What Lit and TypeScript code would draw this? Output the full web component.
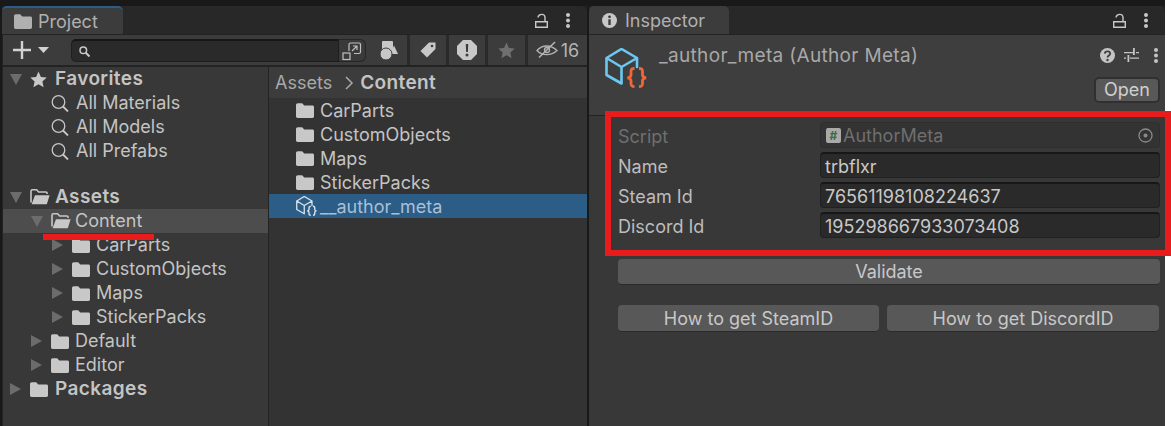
import { LitElement, html, css, svg } from "lit";
import { customElement } from "lit/decorators.js";

const folder = svg`<path d="M0 2.2C0 1 .8.3 1.8.3h4.4l2 2.2h8.2c1 0 1.6.7 1.6 1.6v9.2c0 1-.7 1.7-1.6 1.7H1.7C.7 15 0 14.3 0 13.3z" fill="currentColor"/>`;
const folderOpen = svg`<path d="M1 13.6V2.2C1 1.3 1.6.8 2.4.8h4.2l2 2.2h7.2c.8 0 1.3.5 1.3 1.3V5" fill="none" stroke="currentColor" stroke-width="1.6"/><path d="M1.6 15.2 5 6.2h14.6l-2.8 9z" fill="currentColor"/>`;
const star = svg`<path d="M8.5 .5l2.4 5.4 5.8.6-4.3 3.9 1.2 5.8-5.1-3-5.1 3 1.2-5.800L.3 6.500l5.800-.6z" fill="currentColor"/>`;
const lens = svg`<circle cx="7.500" cy="8" r="6.300" fill="none" stroke="currentColor" stroke-width="1.300"/><path d="M12 12.500l5 5" stroke="currentColor" stroke-width="1.800"/>`;
// cube with braces, drawn on a 42x40 grid; used large in the inspector and small in the list
const cube = svg`<path d="M32 19V10L16.500 1 1.500 10v17l15 8.500M1.500 10l15 9v16.500M16.500 19 32 10" fill="none" stroke="currentColor" stroke-width="2.600" stroke-linejoin="round" stroke-linecap="round"/>`;
const braces = svg`<path d="M29.500 20.500c-3 0-3.500 1-3.500 3v3.500c0 1.500-.8 2.300-3.500 2.800 2.700.5 3.500 1.300 3.500 2.800v3c0 2 .5 3 3.500 3M34 20.500c3 0 3.500 1 3.500 3v3.500c0 1.500.8 2.300 3.500 2.800-2.700.5-3.500 1.300-3.500 2.800v3c0 2-.5 3-3.500 3" fill="none" stroke="currentColor" stroke-width="2.800"/>`;

type Row = { label: string; depth: number; icon: "star" | "folder" | "open" | "lens"; arrow?: "down" | "right"; bold?: boolean; on?: boolean };

const tree: (Row | null)[] = [
  { label: "Favorites", depth: 0, icon: "star", arrow: "down", bold: true },
  { label: "All Materials", depth: 1, icon: "lens" },
  { label: "All Models", depth: 1, icon: "lens" },
  { label: "All Prefabs", depth: 1, icon: "lens" },
  null,
  { label: "Assets", depth: 0, icon: "open", arrow: "down", bold: true },
  { label: "Content", depth: 1, icon: "open", arrow: "down", on: true },
  { label: "CarParts", depth: 2, icon: "folder", arrow: "right" },
  { label: "CustomObjects", depth: 2, icon: "folder", arrow: "right" },
  { label: "Maps", depth: 2, icon: "folder", arrow: "right" },
  { label: "StickerPacks", depth: 2, icon: "folder", arrow: "right" },
  { label: "Default", depth: 1, icon: "folder", arrow: "right" },
  { label: "Editor", depth: 1, icon: "folder", arrow: "right" },
  { label: "Packages", depth: 0, icon: "folder", arrow: "right", bold: true },
];

const fields = [
  { label: "Name", value: "trbflxr" },
  { label: "Steam Id", value: "76561198108224637" },
  { label: "Discord Id", value: "195298667933073408" },
];

@customElement("app-root")
export class AppRoot extends LitElement {
  static styles = css`
    :host {
      display: block;
      position: relative;
      width: 1171px;
      height: 426px;
      overflow: hidden;
      background: #fff;
      font-family: Inter, "Liberation Sans", sans-serif;
      font-size: 18px;
      color: #c4c4c4;
    }
    svg { display: block; }
    b {
      font-size: 19px;
      font-weight: 600;
      letter-spacing: 0.4px;
    }
    .shell {
      display: flex;
      gap: 2px;
      box-sizing: border-box;
      width: 1165px;
      height: 426px;
      padding: 6px 0 0 2px;
      background: #191919;
    }
    .panel {
      display: flex;
      flex-direction: column;
      background: #232323;
    }
    .project { width: 585px; }
    .inspector { width: 576px; }
    .tabs {
      display: flex;
      justify-content: space-between;
      align-items: center;
      flex: none;
      height: 28px;
      background: #282828;
      border-radius: 6px 6px 0 0;
    }
    .tab {
      display: flex;
      align-items: center;
      box-sizing: border-box;
      height: 28px;
      background: #3c3c3c;
      border-radius: 5px 5px 0 0;
      color: #b0b0b0;
    }
    .project .tab {
      gap: 6px;
      width: 121px;
      padding-left: 12px;
      border-top: 2px solid #2c5d87;
    }
    .inspector .tab { gap: 8px; width: 140px; padding-left: 13px; }
    .win-tools {
      display: flex;
      align-items: center;
      gap: 18px;
      padding-right: 17px;
      color: #c8c8c8;
    }
    .toolbar {
      display: flex;
      flex: none;
      height: 30px;
      margin: 1px 0 2px 1px;
      background: #3c3c3c;
    }
    .adder {
      display: flex;
      align-items: center;
      gap: 7px;
      width: 68px;
      padding-left: 10px;
      box-sizing: border-box;
      color: #d2d2d2;
    }
    .search {
      display: flex;
      align-items: center;
      box-sizing: border-box;
      width: 268px;
      height: 23px;
      margin-top: 4px;
      padding-left: 7px;
      background: #2a2a2a;
      border: 1px solid #1e1e1e;
      border-top: 2px solid #171717;
      border-radius: 5px 0 0 5px;
      color: #c8c8c8;
    }
    .pop {
      display: flex;
      align-items: center;
      justify-content: center;
      box-sizing: border-box;
      width: 27px;
      height: 23px;
      margin-top: 4px;
      background: #3a3a3a;
      border: 1px solid #262626;
      border-left: 0;
      border-radius: 0 6px 6px 0;
      color: #c0c0c0;
    }
    .filters {
      display: flex;
      gap: 3px;
      flex: 1;
      margin-left: 5px;
      background: #2a2a2a;
    }
    .filter {
      display: flex;
      align-items: center;
      justify-content: center;
      flex: none;
      width: 36px;
      background: #3c3c3c;
      color: #c8c8c8;
    }
    .filter.fav { width: 37px; color: #6f6f6f; }
    .filter.hidden {
      flex: 1;
      gap: 3px;
      color: #b4b4b4;
    }
    .split {
      display: flex;
      flex: 1;
      min-height: 0;
      margin-left: 1px;
    }
    .tree {
      flex: none;
      width: 265px;
      background: #383838;
      border-right: 1px solid #232323;
    }
    .row {
      display: flex;
      align-items: center;
      height: 24px;
      white-space: nowrap;
    }
    .gap { height: 22px; }
    .d0 { padding-left: 7px; }
    .d1 { padding-left: 28px; }
    .d2 { padding-left: 49px; }
    .row.on { background: #4d4d4d; }
    .label { margin-bottom: 2px; }
    .arrow {
      display: flex;
      align-items: center;
      flex: none;
      width: 20px;
      color: #6c6c6c;
    }
    .icon {
      flex: none;
      width: 25px;
      color: #c8c8c8;
    }
    .d1 .icon, .d2 .icon { width: 24px; }
    .d1 .icon.lens { width: 25px; }
    .browser {
      display: flex;
      flex-direction: column;
      flex: 1;
      background: #333;
    }
    .crumbs {
      display: flex;
      align-items: center;
      flex: none;
      height: 31px;
      padding-left: 6px;
      background: #3c3c3c;
      color: #a8a8a8;
    }
    .crumbs svg { margin: 0 6px 0 13px; }
    .crumbs b { color: #c4c4c4; }
    .file { padding-left: 27px; }
    .file .icon { width: 24px; }
    .file.sel { background: #2c5d87; color: #a7c0d8; }
    .file.sel .icon { color: #d9e4ee; }
    .head {
      display: flex;
      flex: none;
      box-sizing: border-box;
      height: 81px;
      margin-top: 1px;
      padding: 11px 5px 0 16px;
      background: #3e3e3e;
      border-bottom: 1px solid #232323;
    }
    .cube { flex: none; margin-top: 2px; color: #6cc8f2; }
    .cube .br { color: #f0663a; }
    .title {
      flex: 1;
      margin-left: 12px;
      margin-top: -2px;
      font-size: 19px;
      letter-spacing: 0.33px;
      color: #a8a8a8;
    }
    .head-side {
      display: flex;
      flex-direction: column;
      align-items: flex-end;
      gap: 13px;
    }
    .head-tools {
      display: flex;
      align-items: center;
      gap: 9px;
      padding-right: 2px;
      height: 18px;
      color: #c4c4c4;
    }
    .head-tools .kebab { margin-left: 6px; }
    .open-btn {
      box-sizing: border-box;
      width: 66px;
      height: 26px;
      line-height: 22px;
      text-align: center;
      background: #585858;
      border: 2px solid #303030;
      border-radius: 5px;
      color: #d0d0d0;
    }
    .body {
      flex: 1;
      background: #383838;
      padding: 6px 5px 0 29px;
    }
    .prop {
      display: flex;
      align-items: center;
      height: 26px;
      margin-bottom: 4px;
    }
    .prop label {
      flex: none;
      width: 202px;
      padding-top: 2px;
      color: #bdbdbd;
    }
    .prop.off label { color: #6f6f6f; }
    .value {
      display: flex;
      align-items: center;
      flex: 1;
      box-sizing: border-box;
      height: 26px;
      padding: 1px 0 0 4px;
      background: #2a2a2a;
      border: 1px solid #212121;
      border-top: 2px solid #171717;
      border-radius: 4px;
      color: #c8c8c8;
    }
    .prop.off .value {
      justify-content: space-between;
      background: #333;
      border: 1px solid #2e2e2e;
      color: #6f6f6f;
      padding: 1px 6px 0 5px;
    }
    .script { display: flex; align-items: center; gap: 2px; }
    .hash {
      width: 15px;
      height: 15px;
      line-height: 15px;
      text-align: center;
      font-size: 12px;
      font-weight: 700;
      background: #a9a9a9;
      border-radius: 2px;
      color: #3d6b3d;
    }
    .btn {
      box-sizing: border-box;
      height: 26px;
      line-height: 25px;
      text-align: center;
      background: #585858;
      border-bottom: 1px solid #2a2a2a;
      border-radius: 4px;
      color: #c8c8c8;
    }
    .validate { margin-top: 21px; }
    .pair {
      display: grid;
      grid-template-columns: 261px 272px;
      gap: 8px;
      margin-top: 20px;
    }
    .pair .btn { height: 27px; line-height: 27px; }
    .mark { position: absolute; background: #e81c1c; }
    .underline { left: 43px; top: 234px; width: 111px; height: 6px; }
    .box {
      left: 605px;
      top: 111px;
      box-sizing: border-box;
      width: 566px;
      height: 145px;
      background: none;
      border: 6px solid #e81c1c;
    }
  `;

  private tri(dir?: "down" | "right") {
    if (dir === "down") return html`<svg width="12" height="11" viewBox="0 0 12 11"><path d="M0 0h12L6 11z" fill="currentColor"/></svg>`;
    if (dir === "right") return html`<svg width="11" height="12" viewBox="0 0 11 12"><path d="M0 0l11 6L0 12z" fill="currentColor"/></svg>`;
    return null;
  }

  private rowIcon(kind: Row["icon"]) {
    if (kind === "star") return html`<svg width="17" height="17" viewBox="0 0 17 17">${star}</svg>`;
    if (kind === "lens") return html`<svg width="18" height="18" viewBox="0 0 18 18">${lens}</svg>`;
    if (kind === "open") return html`<svg width="20" height="16" viewBox="0 0 20 16">${folderOpen}</svg>`;
    return html`<svg width="18" height="15" viewBox="0 0 18 15">${folder}</svg>`;
  }

  private kebab() {
    return html`<svg class="kebab" width="4" height="15" viewBox="0 0 4 15"><circle cx="2" cy="2" r="2" fill="currentColor"/><circle cx="2" cy="7.500" r="2" fill="currentColor"/><circle cx="2" cy="13" r="2" fill="currentColor"/></svg>`;
  }

  private winTools() {
    return html`<div class="win-tools">
      <svg width="13" height="15" viewBox="0 0 13 15"><path d="M.7 8.700h11.600v5.600H.7z M3 4.500C3.500.3 10 .3 10 4.500v4.200" fill="none" stroke="currentColor" stroke-width="1.400"/></svg>
      ${this.kebab()}
    </div>`;
  }

  render() {
    return html`
      <div class="shell">
        <section class="panel project">
          <div class="tabs">
            <div class="tab">
              <svg width="18" height="15" viewBox="0 0 18 15">${folder}</svg>
              Project
            </div>
            ${this.winTools()}
          </div>
          <div class="toolbar">
            <div class="adder">
              <svg width="18" height="18" viewBox="0 0 18 18"><path d="M9 0v18M0 9h18" stroke="currentColor" stroke-width="2.400"/></svg>
              <svg width="11" height="6" viewBox="0 0 11 6"><path d="M0 0h11L5.500 6z" fill="currentColor"/></svg>
            </div>
            <div class="search">
              <svg width="11" height="11" viewBox="0 0 11 11"><circle cx="4.300" cy="4.300" r="3.300" fill="none" stroke="currentColor" stroke-width="1.500"/><path d="M6.800 6.800 10.500 10.500" stroke="currentColor" stroke-width="2"/></svg>
            </div>
            <div class="pop">
              <svg width="20" height="20" viewBox="0 0 20 20" fill="none" stroke="currentColor" stroke-width="1.200"><path d="M7 10V3.500C7 2.500 7.500 2 8.500 2H17c1 0 1.500.5 1.500 1.500V11c0 1-.5 1.500-1.500 1.500h-5"/><path d="M10 10l5-5M11 5h4v4"/><rect x="1" y="12" width="7" height="6.500"/></svg>
            </div>
            <div class="filters">
              <div class="filter">
                <svg width="18" height="19" viewBox="0 0 18 19" fill="currentColor"><rect x="2" y="0" width="11" height="10" rx="1"/><path d="M14 4.500l4 8.500h-8z"/><circle cx="6" cy="13" r="6" stroke="#3c3c3c"/></svg>
              </div>
              <div class="filter">
                <svg width="16" height="16" viewBox="0 0 16 16"><path d="M9 .500h6.500V7L7 15.500.500 9z" fill="currentColor"/><circle cx="12" cy="4" r="1.300" fill="#3c3c3c"/></svg>
              </div>
              <div class="filter">
                <svg width="20" height="20" viewBox="0 0 20 20"><path d="M6 0h8l6 6v8l-6 6H6l-6-6V6z" fill="currentColor"/><path d="M8.800 4h2.400l-.3 8H9.100z" fill="#3c3c3c"/><circle cx="10" cy="15" r="1.500" fill="#3c3c3c"/></svg>
              </div>
              <div class="filter fav">
                <svg width="17" height="17" viewBox="0 0 17 17">${star}</svg>
              </div>
              <div class="filter hidden">
                <svg width="22" height="18" viewBox="0 0 22 18" fill="none" stroke="currentColor" stroke-width="1.300"><path d="M1 9.500c5-6 14-6 20 0-6 5.500-15 5.500-20 0z"/><path d="M3 16.500 19 1" stroke-width="1.600"/><circle cx="11" cy="9" r="2.500"/></svg>
                16
              </div>
            </div>
          </div>
          <div class="split">
            <div class="tree">
              ${tree.map((r) =>
                r === null
                  ? html`<div class="gap"></div>`
                  : html`<div class="row d${r.depth} ${r.on ? "on" : ""}">
                      <span class="arrow">${this.tri(r.arrow)}</span>
                      <span class="icon ${r.icon}">${this.rowIcon(r.icon)}</span>
                      <span class="label">${r.bold ? html`<b>${r.label}</b>` : r.label}</span>
                    </div>`
              )}
            </div>
            <div class="browser">
              <div class="crumbs">
                Assets
                <svg width="9" height="14" viewBox="0 0 9 14"><path d="M1 1l6 6-6 6" fill="none" stroke="currentColor" stroke-width="1.500"/></svg>
                <b>Content</b>
              </div>
              ${["CarParts", "CustomObjects", "Maps", "StickerPacks"].map(
                (name) => html`<div class="row file">
                  <span class="icon"><svg width="18" height="15" viewBox="0 0 18 15">${folder}</svg></span>
                  ${name}
                </div>`
              )}
              <div class="row file sel">
                <span class="icon"><svg width="21" height="20" viewBox="0 0 42 40">${cube}${braces}</svg></span>
                __author_meta
              </div>
            </div>
          </div>
        </section>

        <section class="panel inspector">
          <div class="tabs">
            <div class="tab">
              <svg width="15" height="15" viewBox="0 0 15 15"><circle cx="7.500" cy="7.500" r="7.500" fill="#c8c8c8"/><rect x="6.300" y="6.300" width="2.400" height="5.700" fill="#3c3c3c"/><circle cx="7.500" cy="3.800" r="1.400" fill="#3c3c3c"/></svg>
              Inspector
            </div>
            ${this.winTools()}
          </div>
          <div class="head">
            <svg class="cube" width="42" height="40" viewBox="0 0 42 40">${cube}<g class="br">${braces}</g></svg>
            <div class="title">_author_meta (Author Meta)</div>
            <div class="head-side">
              <div class="head-tools">
                <svg width="15" height="15" viewBox="0 0 15 15"><circle cx="7.500" cy="7.500" r="7.500" fill="currentColor"/><path d="M4.800 5.600C5 2.700 10 2.700 10.200 5.500c0 2-2.700 2-2.700 4" fill="none" stroke="#3e3e3e" stroke-width="1.800"/><circle cx="7.500" cy="12" r="1.200" fill="#3e3e3e"/></svg>
                <svg width="15" height="14" viewBox="0 0 15 14" fill="currentColor"><path d="M0 4h9V5.200H0zM12 4h3v1.200h-3zM9 0h1.800v7H9zM0 9.500h2V10.700H0zM6 9.500h9v1.200H6zM3.500 7h1.800v7H3.500z"/></svg>
                ${this.kebab()}
              </div>
              <div class="open-btn">Open</div>
            </div>
          </div>
          <div class="body">
            <div class="prop off">
              <label>Script</label>
              <div class="value">
                <span class="script"><span class="hash">#</span>AuthorMeta</span>
                <svg width="15" height="15" viewBox="0 0 15 15"><circle cx="7.500" cy="7.500" r="6.500" fill="none" stroke="#8a8a8a" stroke-width="1.300"/><circle cx="7.500" cy="7.500" r="2" fill="#8a8a8a"/></svg>
              </div>
            </div>
            ${fields.map(
              (f) => html`<div class="prop">
                <label>${f.label}</label>
                <div class="value">${f.value}</div>
              </div>`
            )}
            <div class="btn validate">Validate</div>
            <div class="pair">
              <div class="btn">How to get SteamID</div>
              <div class="btn">How to get DiscordID</div>
            </div>
          </div>
        </section>
      </div>
      <div class="mark underline"></div>
      <div class="mark box"></div>
    `;
  }
}
